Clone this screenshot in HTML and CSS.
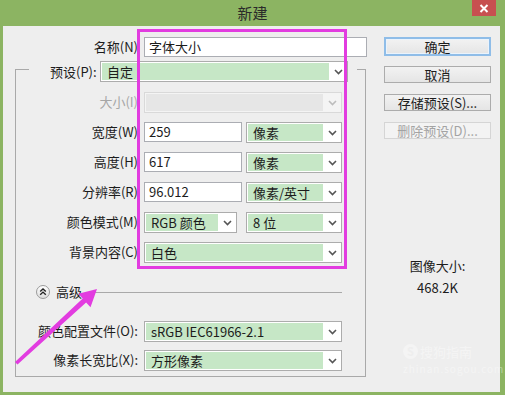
FILE: index.html
```html
<!DOCTYPE html>
<html lang="zh-CN">
<head>
<meta charset="utf-8">
<title>新建</title>
<link rel="stylesheet" href="styles.css">
</head>
<body>
<div class="window">
  <div class="titlebar">
    <span></span>
    <span class="title">新建</span>
    <span class="close"><svg width="10" height="9" viewBox="0 0 10 9"><path d="M1.5 1 L8.5 8 M8.5 1 L1.5 8" stroke="#fff" stroke-width="2" fill="none"/></svg></span>
  </div>
  <div class="client">
    <div class="left">
      <div class="row">
        <span class="lbl lbl-name">名称(N)</span>
        <div class="input w-name">字体大小</div>
      </div>

      <div class="preset-head">
        <span class="gb-tl"></span>
        <span class="plbl">预设(P):</span>
        <div class="select s-preset"><span class="sv">自定</span><span class="arr"><svg width="9" height="6" viewBox="0 0 9 6"><path d="M1 1 L4.5 4.5 L8 1" stroke="#555" stroke-width="1.6" fill="none"/></svg></span></div>
        <span class="gb-tr"></span>
      </div>

      <div class="group">
        <div class="row">
          <span class="lbl glbl disabled">大小(I)</span>
          <div class="select s-full is-disabled"><span class="sv"></span><span class="arr"><svg width="9" height="6" viewBox="0 0 9 6"><path d="M1 1 L4.5 4.5 L8 1" stroke="#bdbdbd" stroke-width="1.6" fill="none"/></svg></span></div>
        </div>
        <div class="row gap">
          <span class="lbl glbl">宽度(W)</span>
          <div class="input w-num">259</div>
          <div class="select s-unit"><span class="sv">像素</span><span class="arr"><svg width="9" height="6" viewBox="0 0 9 6"><path d="M1 1 L4.5 4.5 L8 1" stroke="#555" stroke-width="1.6" fill="none"/></svg></span></div>
        </div>
        <div class="row gap">
          <span class="lbl glbl">高度(H)</span>
          <div class="input w-num">617</div>
          <div class="select s-unit"><span class="sv">像素</span><span class="arr"><svg width="9" height="6" viewBox="0 0 9 6"><path d="M1 1 L4.5 4.5 L8 1" stroke="#555" stroke-width="1.6" fill="none"/></svg></span></div>
        </div>
        <div class="row gap">
          <span class="lbl glbl">分辨率(R)</span>
          <div class="input w-num">96.012</div>
          <div class="select s-unit"><span class="sv">像素/英寸</span><span class="arr"><svg width="9" height="6" viewBox="0 0 9 6"><path d="M1 1 L4.5 4.5 L8 1" stroke="#555" stroke-width="1.6" fill="none"/></svg></span></div>
        </div>
        <div class="row gap">
          <span class="lbl glbl">颜色模式(M)</span>
          <div class="select s-mode"><span class="sv">RGB 颜色</span><span class="arr"><svg width="9" height="6" viewBox="0 0 9 6"><path d="M1 1 L4.5 4.5 L8 1" stroke="#555" stroke-width="1.6" fill="none"/></svg></span></div>
          <div class="select s-unit"><span class="sv">8 位</span><span class="arr"><svg width="9" height="6" viewBox="0 0 9 6"><path d="M1 1 L4.5 4.5 L8 1" stroke="#555" stroke-width="1.6" fill="none"/></svg></span></div>
        </div>
        <div class="row gap">
          <span class="lbl glbl">背景内容(C)</span>
          <div class="select s-full"><span class="sv">白色</span><span class="arr"><svg width="9" height="6" viewBox="0 0 9 6"><path d="M1 1 L4.5 4.5 L8 1" stroke="#555" stroke-width="1.6" fill="none"/></svg></span></div>
        </div>

        <div class="adv">
          <span class="adv-btn"><svg width="14" height="14" viewBox="0 0 14 14"><defs><linearGradient id="g" x1="0" y1="0" x2="0" y2="1"><stop offset="0" stop-color="#ffffff"/><stop offset="1" stop-color="#dcdcdc"/></linearGradient></defs><circle cx="7" cy="7" r="6.5" fill="url(#g)" stroke="#9a9a9a"/><path d="M4.2 6.6 L7 3.9 L9.8 6.6 M4.2 9.8 L7 7.1 L9.8 9.8" stroke="#222" stroke-width="1.4" fill="none"/></svg></span>
          <span class="adv-txt">高级</span>
          <span class="adv-line"></span>
        </div>

        <div class="row adv-row">
          <span class="lbl glbl">颜色配置文件(O):</span>
          <div class="select s-full"><span class="sv">sRGB IEC61966-2.1</span><span class="arr"><svg width="9" height="6" viewBox="0 0 9 6"><path d="M1 1 L4.5 4.5 L8 1" stroke="#555" stroke-width="1.6" fill="none"/></svg></span></div>
        </div>
        <div class="row gap2">
          <span class="lbl glbl">像素长宽比(X):</span>
          <div class="select s-full"><span class="sv">方形像素</span><span class="arr"><svg width="9" height="6" viewBox="0 0 9 6"><path d="M1 1 L4.5 4.5 L8 1" stroke="#555" stroke-width="1.6" fill="none"/></svg></span></div>
        </div>
      </div>
    </div>

    <div class="right">
      <div class="btn btn-default">确定</div>
      <div class="btn">取消</div>
      <div class="btn">存储预设(S)...</div>
      <div class="btn btn-disabled">删除预设(D)...</div>
      <div class="imgsize">图像大小:</div>
      <div class="imgval">468.2K</div>
    </div>
  </div>

  <div class="highlight"></div>
  <svg class="pointer" width="505" height="395" viewBox="0 0 505 395">
    <polygon points="15,362 82.7,298.6 78.3,293.8 97,289 90.5,307.2 86.1,302.4 17.5,364.5" fill="#e23ce0"/>
  </svg>
  <div class="watermark">
    <div class="wm-top"><span class="wm-s">S</span> 搜狗指南</div>
    <div class="wm-url">zhinan.sogou.com</div>
  </div>
</div>
</body>
</html>
```

FILE: styles.css
```css
body {
  margin: 0;
  background: #ffffff;
}

.window {
  position: relative;
  width: 505px;
  height: 395px;
  background: #8cb462;
  display: flex;
  flex-direction: column;
  font-family: "Noto Sans CJK SC", "Noto Sans", sans-serif;
  font-size: 13px;
  color: #1c1c1c;
  overflow: hidden;
}

.titlebar {
  height: 26px;
  display: grid;
  grid-template-columns: 1fr auto 1fr;
  align-items: start;
}

.title {
  font-size: 15px;
  line-height: 25px;
  color: #2a2a2a;
}

.close {
  justify-self: end;
  margin-right: 9px;
  width: 24px;
  height: 16px;
  background: #c75050;
  display: flex;
  align-items: center;
  justify-content: center;
}

.client {
  flex: 1;
  margin: 0 5px 3px 3px;
  background: #eeeeee;
  display: flex;
  padding-top: 11px;
}

.left {
  width: 364px;
}

.row {
  display: flex;
  height: 20px;
  align-items: stretch;
}

.row.gap {
  margin-top: 10px;
}

.row.gap2 {
  margin-top: 9px;
}

.lbl {
  text-align: right;
  line-height: 20px;
  white-space: nowrap;
  margin-right: 6px;
}

.lbl-name {
  width: 135px;
}

.glbl {
  width: 122px;
}

.disabled {
  color: #a6a6a6;
}

.input {
  box-sizing: border-box;
  height: 20px;
  background: #ffffff;
  border: 1px solid #abadb3;
  padding-left: 4px;
  line-height: 18px;
  white-space: nowrap;
}

.w-name {
  width: 223px;
}

.w-num {
  width: 98px;
  margin-right: 4px;
}

.select {
  box-sizing: border-box;
  height: 21px;
  display: flex;
  background: #ffffff;
  border: 1px solid #acacac;
}

.sv {
  flex: 1;
  margin: 1px 0 1px 1px;
  background: #c6e7c6;
  padding-left: 5px;
  line-height: 17px;
  white-space: nowrap;
  overflow: hidden;
}

.arr {
  width: 18px;
  display: flex;
  align-items: center;
  justify-content: center;
  padding-top: 1px;
}

.s-full {
  width: 198px;
}

.s-unit {
  width: 96px;
}

.s-mode {
  width: 93px;
  margin-right: 9px;
}

.s-preset {
  width: 248px;
  margin-left: 2px;
}

.is-disabled {
  border-color: #d9d9d9;
  background: #f4f4f4;
}

.is-disabled .sv {
  background: #e6e6e6;
}

.preset-head {
  display: flex;
  margin-top: 4px;
  margin-left: 12px;
  width: 351px;
  height: 21px;
}

.gb-tl {
  width: 13px;
  margin-top: 8px;
  border-top: 1px solid #a9a9a9;
  border-left: 1px solid #a9a9a9;
}

.plbl {
  margin-left: 21px;
  width: 48px;
  line-height: 21px;
  white-space: nowrap;
}

.gb-tr {
  flex: 1;
  margin-left: 9px;
  margin-top: 8px;
  border-top: 1px solid #a9a9a9;
  border-right: 1px solid #a9a9a9;
}

.group {
  box-sizing: border-box;
  margin-left: 12px;
  width: 351px;
  border: 1px solid #a9a9a9;
  border-top: none;
  padding: 10px 0 6px;
}

.adv {
  display: flex;
  align-items: center;
  height: 16px;
  margin-top: 22px;
  padding-left: 20px;
}

.adv-btn {
  display: flex;
  width: 14px;
  height: 14px;
}

.adv-txt {
  margin-left: 6px;
  line-height: 16px;
}

.adv-line {
  flex: 1;
  margin-left: 6px;
  margin-right: 23px;
  border-top: 1px solid #a9a9a9;
  margin-top: 1px;
}

.adv-row {
  margin-top: 21px;
}

.right {
  margin-left: 17px;
  width: 107px;
  display: flex;
  flex-direction: column;
}

.btn {
  box-sizing: border-box;
  height: 17px;
  margin-top: 11px;
  border: 1px solid #acacac;
  background: linear-gradient(#f2f2f2, #e5e5e5);
  text-align: center;
  line-height: 15px;
  color: #1c1c1c;
  white-space: nowrap;
}

.btn-default {
  margin-top: 0;
  height: 19px;
  line-height: 15px;
  border: 2px solid #8fbde8;
  box-shadow: inset 0 0 0 1px #eaf3fc;
}

.btn-default + .btn {
  margin-top: 10px;
}

.btn-disabled {
  color: #a3a3a3;
  border-color: #d5d5d5;
  background: #f3f3f3;
}

.imgsize {
  margin-top: 119px;
  text-align: center;
  line-height: 16px;
}

.imgval {
  margin-top: 6px;
  text-align: center;
  line-height: 16px;
}

.highlight {
  position: absolute;
  left: 137px;
  top: 29px;
  width: 204px;
  height: 234px;
  border: 3px solid #e23ce0;
}

.pointer {
  position: absolute;
  left: 0;
  top: 0;
}

.watermark {
  position: absolute;
  left: 403px;
  top: 343px;
  color: rgba(255, 255, 255, 0.4);
  font-size: 13px;
  line-height: 17px;
}

.wm-top {
  display: flex;
  align-items: center;
  gap: 2px;
}

.wm-s {
  display: inline-flex;
  width: 15px;
  height: 15px;
  border-radius: 50%;
  background: rgba(255, 255, 255, 0.35);
  color: #eeeeee;
  font-weight: bold;
  align-items: center;
  justify-content: center;
  font-size: 11px;
}

.wm-url {
  font-size: 10px;
  letter-spacing: 1px;
}
```
